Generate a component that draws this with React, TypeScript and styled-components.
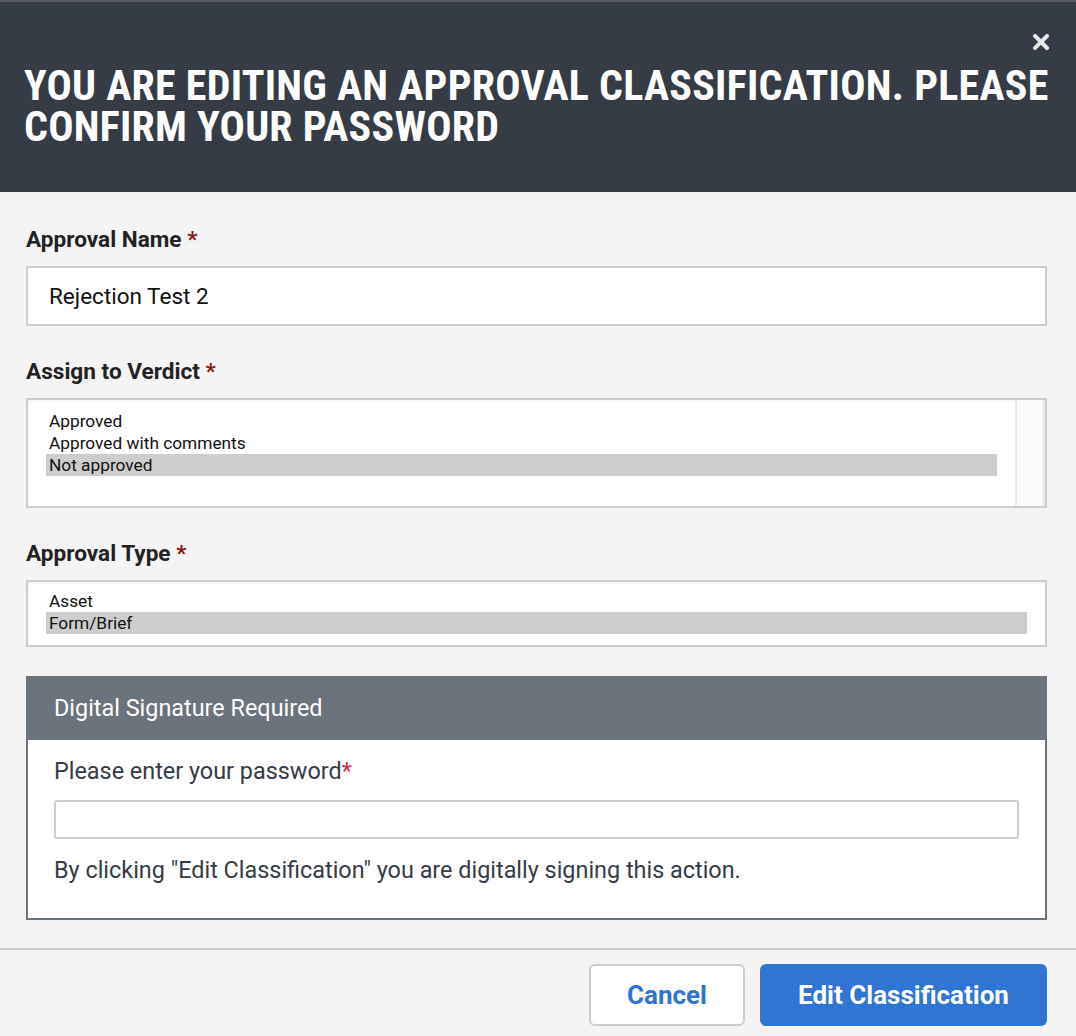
import React, { useState } from 'react';
import styled, { createGlobalStyle } from 'styled-components';

const GlobalStyle = createGlobalStyle`
  html, body {
    margin: 0;
    padding: 0;
    background: #f4f4f4;
  }
  body {
    font-family: Roboto, "Liberation Sans", Arial, sans-serif;
  }
  * {
    box-sizing: border-box;
  }
`;

const verdicts = ['Approved', 'Approved with comments', 'Not approved'];
const types = ['Asset', 'Form/Brief'];

export default function App() {
  const [name, setName] = useState('Rejection Test 2');
  const [verdict, setVerdict] = useState('Not approved');
  const [type, setType] = useState('Form/Brief');
  const [password, setPassword] = useState('');

  return (
    <>
      <GlobalStyle />
      <Backdrop />
      <Modal>
        <Header>
          <CloseButton aria-label='Close'>
            <svg width='16' height='16' viewBox='0 0 16 16'>
              <path d='M2 2 L14 14 M14 2 L2 14' stroke='#e8e8e8' strokeWidth='4' strokeLinecap='square' />
            </svg>
          </CloseButton>
          <Title>You are editing an approval classification. Please confirm your password</Title>
        </Header>
        <Body>
          <Field>
            <Label>
              Approval Name <Required>*</Required>
            </Label>
            <TextInput value={name} onChange={(e) => setName(e.target.value)} />
          </Field>
          <Field>
            <Label>
              Assign to Verdict <Required>*</Required>
            </Label>
            <ListBox $height={110}>
              <ListItems $top={10}>
                {verdicts.map((v) => (
                  <Option key={v} $selected={v === verdict} onClick={() => setVerdict(v)}>
                    {v}
                  </Option>
                ))}
              </ListItems>
              <ScrollTrack />
            </ListBox>
          </Field>
          <Field $spacing={29}>
            <Label>
              Approval Type <Required>*</Required>
            </Label>
            <ListBox $height={67}>
              <ListItems $top={8}>
                {types.map((t) => (
                  <Option key={t} $selected={t === type} onClick={() => setType(t)}>
                    {t}
                  </Option>
                ))}
              </ListItems>
            </ListBox>
          </Field>
          <SignaturePanel>
            <PanelHeader>Digital Signature Required</PanelHeader>
            <PanelBody>
              <PasswordLabel>
                Please enter your password<PasswordStar>*</PasswordStar>
              </PasswordLabel>
              <PasswordInput type='password' value={password} onChange={(e) => setPassword(e.target.value)} />
              <Notice>By clicking "Edit Classification" you are digitally signing this action.</Notice>
            </PanelBody>
          </SignaturePanel>
        </Body>
        <Footer>
          <CancelButton>Cancel</CancelButton>
          <PrimaryButton>Edit Classification</PrimaryButton>
        </Footer>
      </Modal>
    </>
  );
}

const Backdrop = styled.div`
  height: 2px;
  background: #575b62;
`;

const Modal = styled.div`
  display: flex;
  flex-direction: column;
  background: #f4f4f4;
  min-height: 1034px;
`;

const Header = styled.div`
  position: relative;
  height: 190px;
  background: #353c46;
  padding: 63px 20px 0 24px;
`;

const CloseButton = styled.button`
  position: absolute;
  top: 31px;
  right: 26px;
  width: 18px;
  height: 18px;
  padding: 0;
  border: none;
  background: none;
  display: flex;
  align-items: center;
  justify-content: center;
  cursor: pointer;
`;

const Title = styled.h1`
  margin: 0;
  color: #ffffff;
  font-family: "Roboto", "Liberation Sans", sans-serif;
  font-stretch: condensed;
  font-weight: 700;
  font-size: 42px;
  line-height: 41px;
  letter-spacing: 0.25px;
  text-transform: uppercase;
`;

const Body = styled.div`
  padding: 34px 29px 0 26px;
  display: flex;
  flex-direction: column;
`;

const Field = styled.div<{ $spacing?: number }>`
  display: flex;
  flex-direction: column;
  margin-bottom: ${(p) => p.$spacing ?? 32}px;
`;

const Label = styled.label`
  font-size: 22.6px;
  font-weight: 700;
  color: #222222;
  line-height: 28px;
  margin-bottom: 12px;
`;

const Required = styled.span`
  color: #8b1c1c;
`;

const TextInput = styled.input`
  height: 60px;
  width: 100%;
  border: 2px solid #cccccc;
  background: #ffffff;
  padding: 0 21px;
  font-family: Roboto, "Liberation Sans", sans-serif;
  font-size: 22.5px;
  color: #111111;
  outline: none;
`;

const ListBox = styled.div<{ $height: number }>`
  height: ${(p) => p.$height}px;
  border: 2px solid #cccccc;
  background: #ffffff;
  display: flex;
  box-shadow: inset 0 2px 2px rgba(0, 0, 0, 0.04);
`;

const ListItems = styled.ul<{ $top: number }>`
  flex: 1;
  list-style: none;
  margin: 0;
  padding: ${(p) => p.$top}px 18px 0 18px;
`;

const Option = styled.li<{ $selected: boolean }>`
  font-size: 17.3px;
  line-height: 22px;
  color: #111111;
  padding-left: 3px;
  background: ${(p) => (p.$selected ? '#cdcdcd' : 'transparent')};
  cursor: default;
`;

const ScrollTrack = styled.div`
  width: 30px;
  background: #fafafa;
  border-left: 2px solid #e8e8e8;
  border-right: 2px solid #e8e8e8;
`;

const SignaturePanel = styled.div`
  border: 2px solid #6b737c;
  background: #ffffff;
`;

const PanelHeader = styled.div`
  height: 64px;
  background: #6b737c;
  color: #ffffff;
  font-size: 23.4px;
  display: flex;
  align-items: center;
  padding-left: 28px;
  margin: -2px -2px 0 -2px;
`;

const PanelBody = styled.div`
  padding: 17px 26px 34px 26px;
  display: flex;
  flex-direction: column;
`;

const PasswordLabel = styled.label`
  font-size: 23.4px;
  color: #353c46;
  line-height: 28px;
  margin-bottom: 15px;
`;

const PasswordStar = styled.span`
  color: #e0204a;
`;

const PasswordInput = styled.input`
  height: 39px;
  width: 100%;
  border: 2px solid #cccccc;
  border-radius: 3px;
  background: #ffffff;
  outline: none;
  padding: 0 10px;
  font-size: 18px;
  margin-bottom: 17px;
`;

const Notice = styled.p`
  margin: 0;
  font-size: 23.4px;
  line-height: 28px;
  color: #353c46;
`;

const Footer = styled.div`
  margin-top: 28px;
  border-top: 2px solid #cccccc;
  display: flex;
  justify-content: flex-end;
  gap: 15px;
  padding: 14px 29px 0 0;
`;

const BaseButton = styled.button`
  height: 62px;
  border-radius: 6px;
  font-family: Roboto, "Liberation Sans", sans-serif;
  font-weight: 700;
  font-size: 26px;
  cursor: pointer;
`;

const CancelButton = styled(BaseButton)`
  width: 156px;
  background: #ffffff;
  border: 2px solid #cccccc;
  color: #2f74d0;
`;

const PrimaryButton = styled(BaseButton)`
  width: 287px;
  background: #3074d4;
  border: none;
  color: #ffffff;
`;
